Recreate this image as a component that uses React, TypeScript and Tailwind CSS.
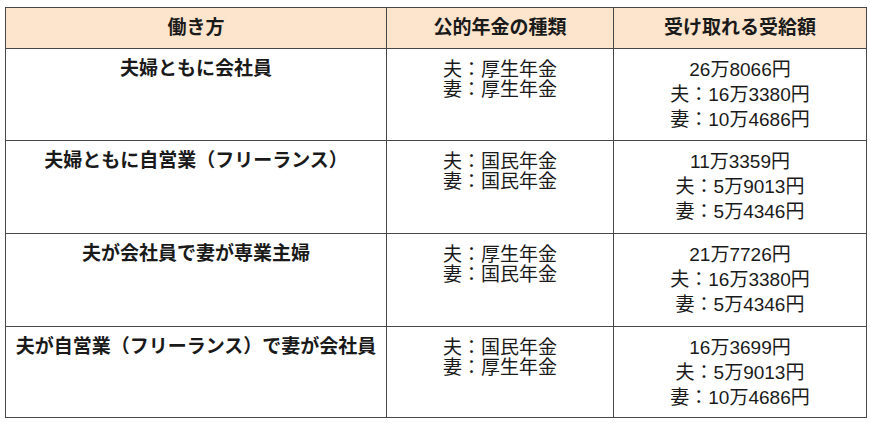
import React from 'react';

type Row = {
  style: string;
  pension: string[];
  amounts: string[];
};

const rows: Row[] = [
  {
    style: '夫婦ともに会社員',
    pension: ['夫：厚生年金', '妻：厚生年金'],
    amounts: ['26万8066円', '夫：16万3380円', '妻：10万4686円'],
  },
  {
    style: '夫婦ともに自営業（フリーランス）',
    pension: ['夫：国民年金', '妻：国民年金'],
    amounts: ['11万3359円', '夫：5万9013円', '妻：5万4346円'],
  },
  {
    style: '夫が会社員で妻が専業主婦',
    pension: ['夫：厚生年金', '妻：国民年金'],
    amounts: ['21万7726円', '夫：16万3380円', '妻：5万4346円'],
  },
  {
    style: '夫が自営業（フリーランス）で妻が会社員',
    pension: ['夫：国民年金', '妻：厚生年金'],
    amounts: ['16万3699円', '夫：5万9013円', '妻：10万4686円'],
  },
];

const rowHeights = ['h-[92px]', 'h-[93px]', 'h-[93px]', 'h-[91px]'];

export default function App() {
  return (
    <div
      className="w-[870px] h-[424px] bg-white pt-[7px] pl-[5px] text-[#1a1a1a]"
      style={{ fontFamily: '"Liberation Sans", "Noto Sans CJK JP", sans-serif' }}
    >
      <table className="table-fixed w-[861px] border-collapse text-[19px]">
        <colgroup>
          <col className="w-[381px]" />
          <col className="w-[227px]" />
          <col className="w-[253px]" />
        </colgroup>
        <thead>
          <tr className="h-[41px] bg-[#fde4cc]">
            <th className="border-[1.5px] border-[#474747] font-bold text-center align-middle">働き方</th>
            <th className="border-[1.5px] border-[#474747] font-bold text-center align-middle">公的年金の種類</th>
            <th className="border-[1.5px] border-[#474747] font-bold text-center align-middle">受け取れる受給額</th>
          </tr>
        </thead>
        <tbody>
          {rows.map((row, i) => (
            <tr key={row.style} className={rowHeights[i]}>
              <td className="border-[1.5px] border-[#474747] align-top text-center font-bold pt-[7px] leading-[25px]">
                {row.style}
              </td>
              <td className="border-[1.5px] border-[#474747] align-top text-center pt-[11px] leading-[20px]">
                {row.pension.map((p) => (
                  <div key={p}>{p}</div>
                ))}
              </td>
              <td className="border-[1.5px] border-[#474747] align-top text-center pt-[8px] leading-[25px]">
                {row.amounts.map((a) => (
                  <div key={a}>{a}</div>
                ))}
              </td>
            </tr>
          ))}
        </tbody>
      </table>
    </div>
  );
}
